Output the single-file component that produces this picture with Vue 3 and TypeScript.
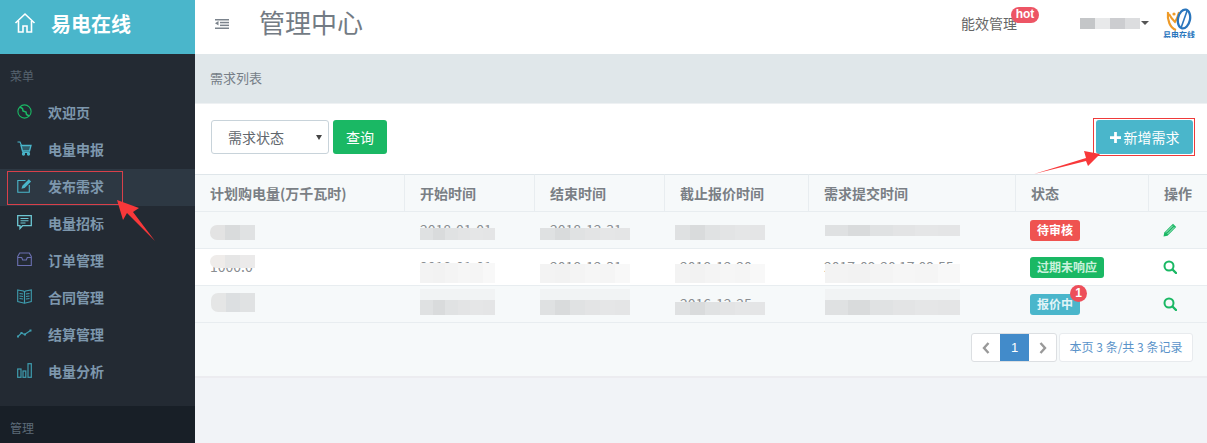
<script setup lang="ts">
interface Smudge { left: number; top: number; width: number; height: number; tones: string[]; halo?: boolean; round?: boolean }
interface Cell { text: string; smudge?: Smudge }
interface Row { cells: Cell[]; status: string; tone: string; badge?: string; action: 'edit' | 'view' }

const menu = [
  { label: '欢迎页', icon: 'ban', color: '#1ab864' },
  { label: '电量申报', icon: 'cart', color: '#4ab6cb' },
  { label: '发布需求', icon: 'edit', color: '#4ab6cb', active: true },
  { label: '电量招标', icon: 'chat', color: '#6cc5d2' },
  { label: '订单管理', icon: 'inbox', color: '#6a6fb0' },
  { label: '合同管理', icon: 'book', color: '#3e9cae' },
  { label: '结算管理', icon: 'line', color: '#3e9cae' },
  { label: '电量分析', icon: 'bars', color: '#3e9cae' },
]

const heads = ['计划购电量(万千瓦时)', '开始时间', '结束时间', '截止报价时间', '需求提交时间', '状态', '操作']

const dark = ['#dfe1e2', '#d9dbdc', '#e0e2e3', '#e3e4e5', '#e5e6e7', '#e4e5e6']
const light = ['#f3f3f3', '#f2f2f2', '#f4f4f4', '#f6f6f6', '#f5f5f5', '#f8f8f8']

function blur(left: number, top: number, width: number, height: number, tones: string[], halo = false, round = false): Smudge {
  return { left, top, width, height, tones, halo, round }
}

const rows: Row[] = [
  {
    cells: [
      { text: '', smudge: blur(15, 13, 45, 15, ['#e3e3e3', '#d9dbdc', '#e0e2e3'], false, true) },
      { text: '2018-01-01', smudge: blur(15, 16, 75, 12, dark) },
      { text: '2018-12-31', smudge: blur(5, 16, 90, 12, dark) },
      { text: '', smudge: blur(10, 13, 90, 15, dark) },
      { text: '', smudge: blur(16, 13, 135, 11, dark) },
    ],
    status: '待审核', tone: 'red', action: 'edit',
  },
  {
    cells: [
      { text: '1000.0', smudge: blur(15, 6, 45, 13, ['#efecea', '#e6e6e6', '#ebeaea'], false, true) },
      { text: '2018-01-01', smudge: blur(15, 14, 75, 20, light) },
      { text: '2018-12-31', smudge: blur(5, 15, 90, 19, light) },
      { text: '2018-12-20', smudge: blur(10, 15, 90, 19, light) },
      { text: '2017-09-20 17:09:55', smudge: blur(16, 15, 135, 19, light) },
    ],
    status: '过期未响应', tone: 'green', action: 'view',
  },
  {
    cells: [
      { text: '', smudge: blur(16, 7, 44, 19, ['#e5e6e6', '#dcdfe1', '#e0e2e3'], false, true) },
      { text: '2016-01-01', smudge: blur(15, 14, 75, 15, dark, true) },
      { text: '', smudge: blur(5, 14, 90, 15, dark, true) },
      { text: '2016-12-25', smudge: blur(10, 16, 90, 13, dark) },
      { text: '', smudge: blur(16, 14, 135, 15, dark, true) },
    ],
    status: '报价中', tone: 'cyan', badge: '1', action: 'view',
  },
]
</script>

<template>
  <div class="page">
    <aside class="side">
      <div class="brand">
        <svg class="home" viewBox="0 0 22 22" width="22" height="22" fill="none" stroke="#fff" stroke-width="1.6">
          <path d="M1.5 11 11 2l9.500 9" />
          <path d="M4.500 9v11h4.500v-6h4v6h4.500V9" />
        </svg>
        <span class="brand-name">易电在线</span>
      </div>
      <div class="section">菜单</div>
      <nav class="menu">
        <a v-for="m in menu" :key="m.label" class="item" :class="{ active: m.active }">
          <svg class="ico" viewBox="0 0 15 15" width="15" height="15" fill="none" :stroke="m.color" stroke-width="1.100">
            <template v-if="m.icon === 'ban'">
              <circle cx="7.500" cy="7.500" r="6.600" />
              <path d="M3 3l2.500 1.500L6 7l3 1 .5 2.500L12 12" stroke-width="1.500" />
            </template>
            <template v-else-if="m.icon === 'cart'">
              <path d="M.5 1h2.500l1.500 3.500" />
              <path d="M4 4.500h10L12.500 10H5.500z" :fill="m.color" fill-opacity=".35" stroke-width="1.300" />
              <path d="M6 10v1.500h6.500" />
              <circle cx="6.500" cy="13" r="1.100" :fill="m.color" />
              <circle cx="11.500" cy="13" r="1.100" :fill="m.color" />
            </template>
            <template v-else-if="m.icon === 'edit'">
              <path d="M8.500 2.500H.8v11.800h11.500V7" />
              <path d="M4.500 10.800l.8-3L11.800 1.200l2.300 2.200-6.500 6.600z" :fill="m.color" stroke="none" />
            </template>
            <template v-else-if="m.icon === 'chat'">
              <path d="M.7 .7h13.600v10H5.500L3 13.500v-2.800H.7z" stroke-width="1.300" />
              <path d="M3.500 3.500h8M3.500 5.800h8M3.500 8h5" />
            </template>
            <template v-else-if="m.icon === 'inbox'">
              <path d="M.7 4.500l2-3.500h9.600l2 3.500v9H.7z" />
              <path d="M.7 5.500h4l1 2.500h3.600l1-2.500h4" />
            </template>
            <template v-else-if="m.icon === 'book'">
              <path d="M.7 1l5.800 1 1 .8 1-.8 5.800-1v11.500l-6.800 1.800-6.800-1.800z" />
              <path d="M7.500 2.800v11.500M2.500 4.500l3.500.5M2.500 7l3.500.5M2.500 9.500l3.500.5M9 5l3.500-.5M9 7.500l3.500-.5M9 10l3.500-.5" stroke-width="1.200" />
            </template>
            <template v-else-if="m.icon === 'line'">
              <path d="M1 10.500 4.500 7l3 1.500L13.500 4.500" stroke-width="1.100" />
              <g :fill="m.color" stroke="none">
                <rect x="0" y="9.500" width="2" height="2" />
                <rect x="3.500" y="6" width="2" height="2" />
                <rect x="7" y="7.500" width="2" height="2" />
                <rect x="12.500" y="3.500" width="2" height="2" />
              </g>
            </template>
            <template v-else>
              <rect x=".7" y="6" width="3.300" height="8.300" stroke-width="1.200" />
              <rect x="6" y="8" width="2.800" height="6.300" stroke-width="1.200" />
              <rect x="11" y=".7" width="3.300" height="13.600" stroke-width="1.200" />
            </template>
          </svg>
          <span>{{ m.label }}</span>
        </a>
      </nav>
      <div class="section-end">管理</div>
    </aside>

    <main class="main">
      <header class="top">
        <svg class="toggle" viewBox="0 0 14 10" width="14" height="10" fill="#7b838c">
          <rect x="0" y="0" width="14" height="1.500" />
          <rect x="5" y="2.800" width="9" height="1.500" />
          <rect x="5" y="5.600" width="9" height="1.500" />
          <rect x="0" y="8.500" width="14" height="1.500" />
          <path d="M0 4.200 3.500 2v4.400z" />
        </svg>
        <h1 class="title">管理中心</h1>
        <div class="energy">能效管理<span class="hot">hot</span></div>
        <div class="user"><i class="user-name"></i><i class="caret"></i></div>
        <svg class="logo" viewBox="0 0 34 30" width="34" height="30">
          <path d="M6 4c-1 8 2 16 8 18" fill="none" stroke="#ee9a28" stroke-width="2.200" />
          <path d="M7 6c2 4 4 6 6 8 2-3 3-6 4-10" fill="none" stroke="#ee9a28" stroke-width="2" />
          <circle cx="12" cy="6" r="1.600" fill="#ee9a28" />
          <ellipse cx="22" cy="11" rx="6" ry="9.500" fill="none" stroke="#2a76bd" stroke-width="2.300" transform="rotate(12 22 11)" />
          <path d="M25 3 19 20" stroke="#2a76bd" stroke-width="1.600" />
          <text x="17" y="29.500" text-anchor="middle" class="logo-text">易电在线</text>
        </svg>
      </header>

      <div class="crumb">需求列表</div>

      <section class="card">
        <div class="tools">
          <div class="select-wrap">
            <select class="select"><option>需求状态</option></select>
            <i class="select-arrow"></i>
          </div>
          <button class="btn query">查询</button>
          <div class="add-frame">
            <button class="btn add">
              <svg viewBox="0 0 12 12" width="11" height="11" fill="#fff"><path d="M4.500 0h3v4.500H12v3H7.500V12h-3V7.500H0v-3h4.500z" /></svg>
              新增需求
            </button>
          </div>
        </div>

        <table class="table">
          <colgroup>
            <col style="width: 210px" />
            <col style="width: 130px" />
            <col style="width: 130px" />
            <col style="width: 144px" />
            <col style="width: 207px" />
            <col style="width: 133px" />
            <col style="width: 58px" />
          </colgroup>
          <thead>
            <tr><th v-for="h in heads" :key="h">{{ h }}</th></tr>
          </thead>
          <tbody>
            <tr v-for="(row, r) in rows" :key="r">
              <td v-for="(cell, c) in row.cells" :key="c">
                <span class="val">{{ cell.text }}</span>
                <span
                  v-if="cell.smudge"
                  class="smudge"
                  :class="{ halo: cell.smudge.halo, round: cell.smudge.round }"
                  :style="{ left: cell.smudge.left + 'px', top: cell.smudge.top + 'px', width: cell.smudge.width + 'px', height: cell.smudge.height + 'px' }"
                >
                  <i v-for="(t, k) in cell.smudge.tones" :key="k" :style="{ background: t }"></i>
                </span>
              </td>
              <td>
                <span class="tag" :class="row.tone">{{ row.status }}<b v-if="row.badge" class="dot">{{ row.badge }}</b></span>
              </td>
              <td>
                <svg v-if="row.action === 'edit'" class="act" viewBox="0 0 14 14" width="14" height="14" fill="#1ab864">
                  <path d="M10 .8 13.200 4l-8.700 8.700L.5 13.500l.8-4z" />
                  <path d="M3 9.500 9.800 2.700M4.500 11 11.300 4.200" stroke="#f6f9fa" stroke-width=".7" />
                </svg>
                <svg v-else class="act" viewBox="0 0 14 14" width="14" height="14" fill="none" stroke="#1ab864">
                  <circle cx="6" cy="6" r="4.500" stroke-width="2" />
                  <path d="M9.500 9.500 13 13" stroke-width="2.400" stroke-linecap="round" />
                </svg>
              </td>
            </tr>
          </tbody>
        </table>

        <div class="pager">
          <div class="pages">
            <span class="pg prev">
              <svg viewBox="0 0 8 12" width="8" height="12" fill="none" stroke="#999" stroke-width="2.400"><path d="M6.500 1 2 6l4.500 5" /></svg>
            </span>
            <span class="pg on">1</span>
            <span class="pg next">
              <svg viewBox="0 0 8 12" width="8" height="12" fill="none" stroke="#999" stroke-width="2.400"><path d="M1.500 1 6 6l-4.500 5" /></svg>
            </span>
          </div>
          <span class="info">本页 3 条/共 3 条记录</span>
        </div>
      </section>
    </main>

    <svg class="marks" viewBox="0 0 1207 443" width="1207" height="443">
      <rect x="7.500" y="171.500" width="115" height="33" fill="none" stroke="#d8404a" stroke-width="1" />
      <polygon points="117,200 139,208 133,212 155,241 127,213 123,220" fill="#f8383a" />
      <polygon points="1034,174 1086,158 1084,151 1100,154 1088,166 1086,161" fill="#f8383a" />
    </svg>
  </div>
</template>

<style>
html, body { margin: 0; padding: 0; }
</style>

<style scoped>
.page {
  position: relative;
  display: flex;
  width: 1207px;
  height: 443px;
  overflow: hidden;
  background: #f1f3f7;
  font-family: "Noto Sans CJK SC", "Liberation Sans", sans-serif;
  font-size: 13px;
  color: #676a6c;
}
.side {
  position: relative;
  flex: 0 0 195px;
  display: flex;
  flex-direction: column;
  background: #232a33;
}
.brand {
  height: 54px;
  box-sizing: border-box;
  display: flex;
  align-items: center;
  padding: 0 0 6px 14px;
  gap: 15px;
  background: #4ab6cb;
}
.home { flex: none; margin-bottom: 3px; }
.brand-name { color: #fff; font-size: 20px; font-weight: 700; line-height: 1; }
.section {
  height: 41px;
  padding-left: 10px;
  line-height: 44px;
  font-size: 12px;
  color: #56636f;
}
.menu { display: flex; flex-direction: column; }
.item {
  height: 37px;
  box-sizing: border-box;
  display: flex;
  align-items: center;
  padding: 0 0 4px 17px;
  gap: 16px;
  color: #7d97ad;
  font-size: 14px;
  font-weight: 700;
}
.item.active { background: #2d3843; }
.ico { flex: none; }
.section-end {
  margin-top: auto;
  height: 37px;
  padding-left: 10px;
  line-height: 44px;
  font-size: 12px;
  color: #5d6b78;
  background: #181f27;
}
.main { flex: 1; min-width: 0; display: flex; flex-direction: column; }
.top {
  height: 54px;
  flex: none;
  display: flex;
  align-items: center;
  padding-left: 20px;
  background: #fff;
}
.toggle { flex: none; margin-bottom: 6px; }
.title {
  margin: 0 0 11px 30px;
  font-size: 26px;
  font-weight: 400;
  line-height: 1;
  color: #737b84;
  letter-spacing: 0;
}
.energy {
  position: relative;
  margin: 0 0 8px auto;
  font-size: 14px;
  color: #666;
  line-height: 1;
}
.hot {
  position: absolute;
  left: 50px;
  top: -9px;
  width: 28px;
  height: 16px;
  border-radius: 8px;
  background: #ed5565;
  color: #fff;
  font-family: "Liberation Sans", sans-serif;
  font-size: 12px;
  font-weight: 700;
  line-height: 15px;
  text-align: center;
}
.user { display: flex; align-items: center; margin: 0 0 8px 63px; gap: 1px; }
.user-name {
  width: 60px;
  height: 11px;
  background: linear-gradient(90deg, #c4c6c8 0 15px, #e8e9ea 15px 30px, #cccdd0 30px 45px, #dcdddf 45px);
}
.caret {
  width: 0;
  height: 0;
  border: 4px solid transparent;
  border-top-color: #555;
  border-bottom: 0;
}
.logo { margin: 0 11px 8px 13px; flex: none; }
.logo-text { font-size: 8px; font-weight: 700; fill: #2a76bd; }
.crumb {
  height: 50px;
  flex: none;
  padding-left: 15px;
  line-height: 48px;
  box-sizing: border-box;
  background: #e0e7ea;
  border-bottom: 1px solid #eef1f3;
  font-size: 13px;
  color: #767e87;
}
.card {
  flex: none;
  height: 274px;
  box-sizing: border-box;
  background: #f6f9fa;
  border-bottom: 2px solid #ececf0;
}
.tools {
  height: 70px;
  box-sizing: border-box;
  display: flex;
  align-items: center;
  padding: 0 12px 4px 16px;
  gap: 4px;
  background: #fff;
}
.select-wrap { position: relative; }
.select {
  display: block;
  width: 118px;
  height: 34px;
  appearance: none;
  box-sizing: border-box;
  padding-left: 16px;
  border: 1px solid #c8d3da;
  border-radius: 3px;
  background: #fff;
  color: #60666c;
  font: inherit;
  font-size: 14px;
}
.select-arrow {
  position: absolute;
  right: 7px;
  top: 15px;
  width: 0;
  height: 0;
  border: 3px solid transparent;
  border-top: 5px solid #444;
  border-bottom: 0;
}
.btn {
  height: 34px;
  box-sizing: border-box;
  border: 0;
  border-radius: 3px;
  color: #fff;
  font: inherit;
  font-size: 14px;
  padding: 0;
}
.query { width: 54px; background: #1ab864; }
.add-frame {
  margin-left: auto;
  padding: 2px 2px 2px 3px;
  height: 38px;
  box-sizing: border-box;
  outline: 1px solid #ee3a3a;
  outline-offset: -1px;
}
.add {
  width: 97px;
  background: #4ab6cb;
  display: flex;
  align-items: center;
  justify-content: center;
  gap: 3px;
  font-size: 14px;
}
.table {
  width: 1012px;
  table-layout: fixed;
  border-collapse: separate;
  border-spacing: 0;
  background: #f6f9fa;
}
th {
  height: 38px;
  box-sizing: border-box;
  padding: 0 0 0 15px;
  border-top: 1px solid #dfe6ea;
  border-bottom: 1px solid #e8edf0;
  border-right: 1px solid #e8edf0;
  text-align: left;
  font-size: 14px;
  font-weight: 700;
  color: #7a7f85;
  white-space: nowrap;
}
th:last-child { border-right: 0; }
td {
  position: relative;
  height: 37px;
  box-sizing: border-box;
  padding: 0 0 0 15px;
  border-bottom: 1px solid #e8edf0;
  white-space: nowrap;
  color: #8a8e92;
  font-size: 14px;
}
tbody tr:nth-child(2) td { background: #fff; }
.val { position: relative; top: -1px; }
.smudge {
  position: absolute;
  display: flex;
  overflow: hidden;
}
.smudge.halo { box-shadow: 0 -11px 0 #f1f3f4; }
.smudge.round { border-radius: 7px 0 0 7px; }
.smudge i { flex: 1; }
.tag {
  position: relative;
  display: inline-block;
  height: 21px;
  margin-left: -1px;
  padding: 0 7px;
  border-radius: 3px;
  line-height: 20px;
  font-size: 12px;
  font-weight: 700;
  color: #fff;
  vertical-align: middle;
}
.red { background: #ef5350; }
.green { background: #1ab864; color: #c9f2dc; }
.cyan { background: #4ab6cb; color: #e2f4f7; }
.dot {
  position: absolute;
  right: -7px;
  top: -9px;
  width: 17px;
  height: 17px;
  border-radius: 50%;
  background: #ed4f5a;
  color: #fff;
  font-family: "Liberation Sans", sans-serif;
  font-size: 12px;
  line-height: 17px;
  text-align: center;
}
.act { display: block; margin-left: -1px; }
.pager {
  display: flex;
  justify-content: flex-end;
  align-items: center;
  gap: 2px;
  padding: 10px 14px 0 0;
}
.pages {
  display: flex;
  height: 29px;
  box-sizing: border-box;
  border: 1px solid #dcdfe2;
  border-radius: 3px;
  background: #fff;
  overflow: hidden;
}
.pg {
  display: flex;
  align-items: center;
  justify-content: center;
}
.prev { width: 28px; }
.next { width: 27px; }
.pg.on {
  width: 29px;
  background: #428bca;
  color: #fff;
  font-family: "Liberation Sans", sans-serif;
  font-size: 13px;
}
.info {
  width: 134px;
  height: 29px;
  box-sizing: border-box;
  border: 1px solid #e8ebee;
  border-radius: 3px;
  background: #fff;
  color: #5a93c9;
  font-size: 12px;
  line-height: 26px;
  text-align: center;
}
.marks { position: absolute; left: 0; top: 0; pointer-events: none; }
</style>
